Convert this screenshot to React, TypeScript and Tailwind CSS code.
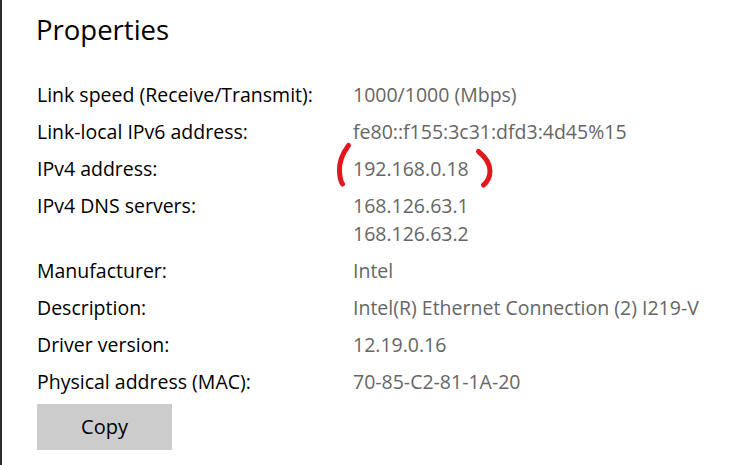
import React from 'react';

const rows: { label: string; values: string[] }[] = [
  { label: 'Link speed (Receive/Transmit):', values: ['1000/1000 (Mbps)'] },
  { label: 'Link-local IPv6 address:', values: ['fe80::f155:3c31:dfd3:4d45%15'] },
  { label: 'IPv4 address:', values: ['192.168.0.18'] },
  { label: 'IPv4 DNS servers:', values: ['168.126.63.1', '168.126.63.2'] },
  { label: 'Manufacturer:', values: ['Intel'] },
  { label: 'Description:', values: ['Intel(R) Ethernet Connection (2) I219-V'] },
  { label: 'Driver version:', values: ['12.19.0.16'] },
  { label: 'Physical address (MAC):', values: ['70-85-C2-81-1A-20'] },
];

const App: React.FC = () => {
  return (
    <div
      className="relative h-[465px] w-[754px] overflow-hidden bg-white border-l-2 border-[#2b2b2b] pl-[34px]"
      style={{ fontFamily: '"Open Sans", "Noto Sans", sans-serif' }}
    >
      <h1 className="pt-[10px] text-[27.5px] leading-[40px] text-black">Properties</h1>

      <div className="mt-[31px] flex flex-col gap-y-[9px]">
        {rows.map((row) => (
          <div key={row.label} className="flex text-[19.5px] leading-[28px]">
            <div className="w-[317px] shrink-0 pl-px text-black">{row.label}</div>
            <div className="flex flex-col text-[#666666]">
              {row.values.map((v) => (
                <span key={v}>{v}</span>
              ))}
            </div>
          </div>
        ))}
      </div>

      <button className="ml-px mt-[8px] flex h-[46px] w-[135px] items-center justify-center bg-[#cccccc] text-[20px] text-black">
        Copy
      </button>

      {/* red pen marks around the IPv4 address */}
      <svg className="pointer-events-none absolute left-0 top-0" width="754" height="465">
        <path
          d="M346.5 145.5 C340 154 337 164 337.5 172 C338 178 339 182 340.5 184"
          fill="none"
          stroke="#e3161d"
          strokeWidth="5"
          strokeLinecap="round"
        />
        <path
          d="M476.5 151.5 C482 156 488 163 488 171 C488 177 485 182 481.5 185"
          fill="none"
          stroke="#e3161d"
          strokeWidth="5"
          strokeLinecap="round"
        />
      </svg>
    </div>
  );
};

export default App;
